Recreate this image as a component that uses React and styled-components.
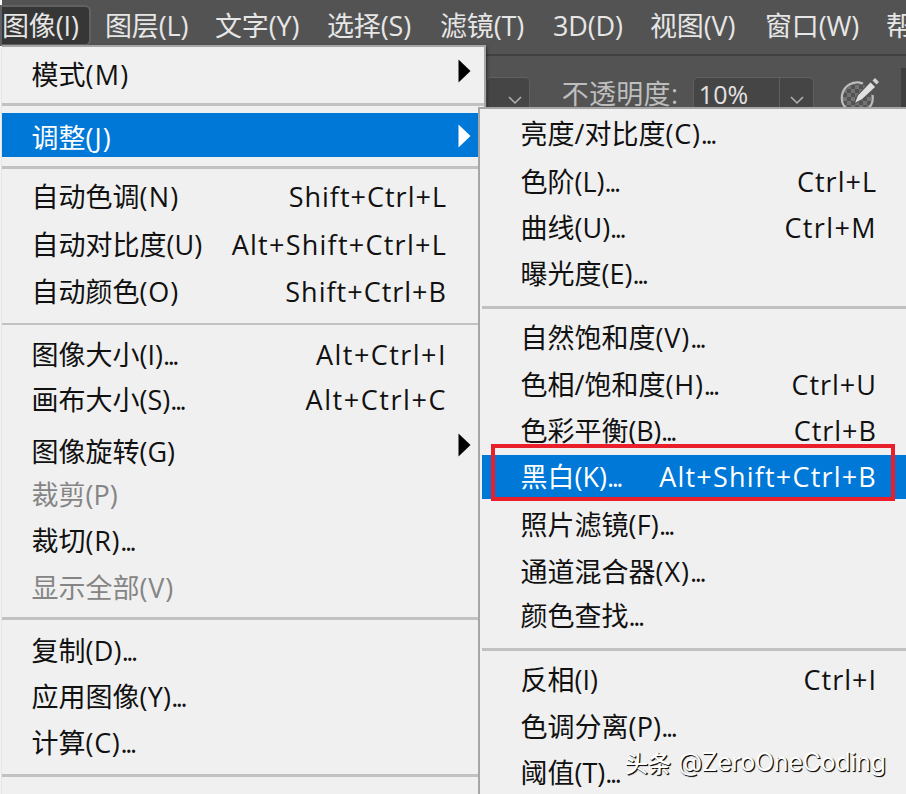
import React from "react";
import styled, { createGlobalStyle } from "styled-components";

const Global = createGlobalStyle`
  * { box-sizing: border-box; }
  body { margin: 0; background: #fff; overflow: hidden; }
`;

const Window = styled.div`
  position: relative;
  width: 906px;
  height: 794px;
  overflow: hidden;
  padding-left: 2px;
  background: #fafafa;
  color: #111;
  font: 27px/40px "Open Sans", "Noto Sans CJK SC", sans-serif;
  white-space: nowrap;
`;

const MenuBar = styled.nav`
  display: grid;
  grid-template-columns: 103px 110px 112px 113px 113px 97px 115px 121px 60px;
  height: 54px;
  padding-top: 7px;
  background: #535353;
  color: #e6e6e6;
`;

const MenuTitle = styled.span`
  width: ${(p) => (p.$open ? "87px" : "auto")};
  height: 37px;
  line-height: 38px;
  letter-spacing: -0.15px;
  background: ${(p) => (p.$open ? "#363636" : "none")};
  box-shadow: ${(p) => (p.$open ? "0 0 0 2px #616161" : "none")};
  border-radius: 0 4px 4px 0;
`;

const OptionsBar = styled.div`
  display: flex;
  align-items: flex-start;
  height: 740px;
  padding: 21px 0 0 484px;
  border-top: 2px solid #404040;
  background: #535353;
  color: #bebebe;
`;

const Field = styled.div`
  display: flex;
  justify-content: flex-end;
  width: ${(p) => p.$width}px;
  height: 40px;
  border: 1px solid #606060;
  border-radius: 5px;
  background: #454545;
  color: #e2e2e2;
`;

const FieldLabel = styled.span`
  width: 132px;
  margin-left: 32px;
  line-height: 34px;
  letter-spacing: 0.3px;
`;

const FieldValue = styled.span`
  flex: 1;
  padding-left: 5px;
  font-size: 25px;
  line-height: 33px;
  letter-spacing: 0.1px;
`;

const FieldButton = styled.span`
  display: flex;
  justify-content: center;
  width: ${(p) => (p.$divided ? 34 : 29)}px;
  padding-top: 18px;
  border-left: 1px solid ${(p) => (p.$divided ? "#606060" : "transparent")};
`;

const BrushIcon = styled.svg`
  flex: none;
  margin-left: 25px;
`;

const NextField = styled.div`
  width: 5px;
  height: 50px;
  margin: -9px 0 0 20px;
  background: #3f3f3f;
`;

const Menu = styled.div`
  position: absolute;
  left: 2px;
  top: 45px;
  width: 484px;
  height: 760px;
  border: 2px solid #a6a6a6;
  border-width: 2px 2px 0 0;
  background: #f0f0f0;
  box-shadow: 1px 2px 3px rgba(0, 0, 0, 0.5);
`;

const Submenu = styled(Menu)`
  left: 478px;
  top: 107px;
  width: 440px;
  padding-left: 2px;
  border-width: 2px 0 0 2px;
  box-shadow: none;
`;

const Item = styled.div`
  display: flex;
  align-items: center;
  justify-content: space-between;
  height: ${(p) => (p.$active ? 44 : 40)}px;
  margin-top: ${(p) => p.$gap}px;
  padding: ${(p) => (p.$active ? p.$drop : 0)}px ${(p) => (p.$sub ? 41 : 37)}px 0 ${(p) => (p.$sub ? 38.5 : 29.5)}px;
  background: ${(p) => (p.$active ? "#0078d7" : "none")};
  color: ${(p) => (p.$active ? "#fff" : p.$disabled ? "#858585" : "#111")};
`;

const Label = styled.span`
  display: flex;
`;

const Mnemonic = styled.span`
  letter-spacing: ${(p) => p.$spacing}px;
`;

const Dots = styled.span`
  letter-spacing: -2.4px;
`;

const Shortcut = styled.span`
  letter-spacing: ${(p) => p.$spacing}px;
`;

const Arrow = styled.svg`
  margin: 0 -24px ${(p) => p.$lift}px 0;
`;

const Separator = styled.hr`
  height: ${(p) => p.$thick || 3}px;
  margin: ${(p) => p.$gap}px 0 0;
  border: 0;
  background: #c1c1c1;
`;

const Highlight = styled.div`
  position: absolute;
  left: 491px;
  top: 444px;
  width: 404px;
  height: 57px;
  border: 4px solid #e9202c;
`;

const Watermark = styled.div`
  position: absolute;
  left: 625px;
  top: 742px;
  display: flex;
  gap: 7px;
  color: #fff;
  font-family: "Noto Sans CJK SC", sans-serif;
  font-size: 23px;
  font-weight: 500;
  text-shadow: 1px 1px 0 #111, 1px 1px 1px #111;
`;

const Account = styled.span`
  font-family: Inter, sans-serif;
  font-size: 25px;
  font-weight: 400;
  letter-spacing: -0.3px;
`;

const titles = [
  { text: "图像(I)", open: true },
  { text: "图层(L)" },
  { text: "文字(Y)" },
  { text: "选择(S)" },
  { text: "滤镜(T)" },
  { text: "3D(D)" },
  { text: "视图(V)" },
  { text: "窗口(W)" },
  { text: "帮" },
];

const imageMenu = [
  { gap: 8, text: "模式", key: "(M)", spacing: 1.2, arrow: 9 },
  { gap: 8, rule: true },
  { gap: 7, text: "调整", key: "(J)", spacing: 1, arrow: 4, active: true, drop: 6 },
  { gap: 9, rule: true },
  { gap: 8, text: "自动色调", key: "(N)", spacing: 1.2, keys: "Shift+Ctrl+L" },
  { gap: 8, text: "自动对比度", key: "(U)", keys: "Alt+Shift+Ctrl+L", keySpacing: 1.25 },
  { gap: 7, text: "自动颜色", key: "(O)", spacing: 0.9, keys: "Shift+Ctrl+B" },
  { gap: 11, rule: true, thick: 2 },
  { gap: 10, text: "图像大小", key: "(I)", dots: true, keys: "Alt+Ctrl+I", keySpacing: 1.45 },
  { gap: 5, text: "画布大小", key: "(S)", dots: true, keys: "Alt+Ctrl+C", keySpacing: 1.55 },
  { gap: 12, text: "图像旋转", key: "(G)", arrow: 14 },
  { gap: 3, text: "裁剪", key: "(P)", disabled: true },
  { gap: 6, text: "裁切", key: "(R)", spacing: 0.7, dots: true },
  { gap: 7, text: "显示全部", key: "(V)", spacing: 0.9, disabled: true },
  { gap: 9, rule: true },
  { gap: 11, text: "复制", key: "(D)", spacing: 0.2, dots: true },
  { gap: 6, text: "应用图像", key: "(Y)", spacing: 0.2, dots: true },
  { gap: 6, text: "计算", key: "(C)", spacing: 0.7, dots: true },
  { gap: 11, rule: true },
];

const adjustMenu = [
  { gap: 5, text: "亮度/对比度", key: "(C)", spacing: 0.8, dots: true },
  { gap: 8, text: "色阶", key: "(L)", dots: true, keys: "Ctrl+L" },
  { gap: 6, text: "曲线", key: "(U)", dots: true, keys: "Ctrl+M", keySpacing: 1.4 },
  { gap: 6, text: "曝光度", key: "(E)", dots: true },
  { gap: 12, rule: true },
  { gap: 9, text: "自然饱和度", key: "(V)", spacing: 0.9, dots: true },
  { gap: 7, text: "色相/饱和度", key: "(H)", spacing: 0.8, dots: true, keys: "Ctrl+U" },
  { gap: 6, text: "色彩平衡", key: "(B)", spacing: -0.3, dots: true, keys: "Ctrl+B" },
  { gap: 4, text: "黑白", key: "(K)", dots: true, keys: "Alt+Shift+Ctrl+B", keySpacing: 1.2, active: true, drop: 0 },
  { gap: 6, text: "照片滤镜", key: "(F)", spacing: 0.2, dots: true },
  { gap: 7, text: "通道混合器", key: "(X)", spacing: 1, dots: true },
  { gap: 4, text: "颜色查找", key: "", dots: true },
  { gap: 12, rule: true },
  { gap: 9, text: "反相", key: "(I)", keys: "Ctrl+I" },
  { gap: 7, text: "色调分离", key: "(P)", spacing: 0.2, dots: true },
  { gap: 6, text: "阈值", key: "(T)", dots: true },
];

function Entries({ items, sub }) {
  return items.map((it, i) =>
    it.rule ? (
      <Separator key={i} $gap={it.gap} $thick={it.thick} />
    ) : (
      <Item key={i} $gap={it.gap} $active={it.active} $drop={it.drop} $disabled={it.disabled} $sub={sub}>
        <Label>
          {it.text}
          <Mnemonic $spacing={it.spacing || 0}>{it.key}</Mnemonic>
          {it.dots && <Dots>...</Dots>}
        </Label>
        {it.keys && <Shortcut $spacing={it.keySpacing || 1}>{it.keys}</Shortcut>}
        {it.arrow && (
          <Arrow $lift={it.arrow} width="13" height="24" viewBox="0 0 13 24">
            <path d="M0.5 0.5L12.5 12L0.5 23.5Z" fill={it.active ? "#fff" : "#000"} />
          </Arrow>
        )}
      </Item>
    )
  );
}

const Chevron = () => (
  <svg width="14" height="9" viewBox="0 0 14 9" fill="none" stroke="#b4b4b4" strokeWidth="1.5">
    <path d="M1 1L7 7L13 1" />
  </svg>
);

export default function App() {
  return (
    <Window>
      <Global />
      <MenuBar>
        {titles.map((t) => (
          <MenuTitle key={t.text} $open={t.open}>
            {t.text}
          </MenuTitle>
        ))}
      </MenuBar>
      <OptionsBar>
        <Field $width={44}>
          <FieldButton>
            <Chevron />
          </FieldButton>
        </Field>
        <FieldLabel>不透明度:</FieldLabel>
        <Field $width={122}>
          <FieldValue>10%</FieldValue>
          <FieldButton $divided>
            <Chevron />
          </FieldButton>
        </Field>
        <BrushIcon width="42" height="40" viewBox="0 0 42 40">
          <defs>
            <pattern id="checks" width="8" height="8" patternUnits="userSpaceOnUse">
              <path d="M0 0H4V4H0ZM4 4H8V8H4Z" fill="#747474" />
            </pattern>
          </defs>
          <circle cx="18.500" cy="22" r="15" fill="url(#checks)" />
          <path d="M24 6.500A15.500 15.500 0 1 0 33.500 18" fill="none" stroke="#bdbdbd" strokeWidth="2.200" />
          <path d="M15 27L18.500 18L31.500 4.500L37 10L23.500 22.500Z" fill="#e0e0e0" stroke="#535353" strokeWidth="1.200" />
          <path d="M33.500 3.500L36 1L40 5L37.500 7.500Z" fill="#d0d0d0" />
        </BrushIcon>
        <NextField />
      </OptionsBar>
      <Menu>
        <Entries items={imageMenu} />
      </Menu>
      <Submenu>
        <Entries items={adjustMenu} sub />
      </Submenu>
      <Highlight />
      <Watermark>
        头条 <Account>@ZeroOneCoding</Account>
      </Watermark>
    </Window>
  );
}
